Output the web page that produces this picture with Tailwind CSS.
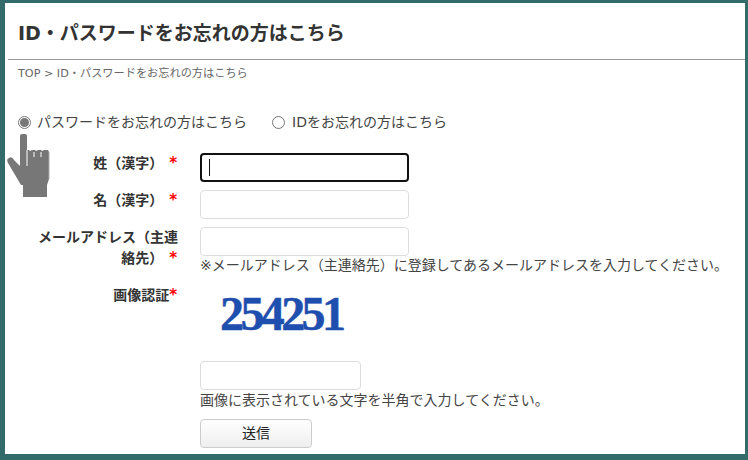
<!DOCTYPE html>
<html lang="ja">
<head>
  <meta charset="UTF-8">
  <title>ID・パスワードをお忘れの方はこちら</title>
  <script src="https://cdn.jsdelivr.net/npm/@tailwindcss/browser@4"></script>
</head>
<body class="w-[748px] h-[460px] overflow-hidden bg-[#336b6b] pt-[3px] pl-[5px] pr-[3px] pb-[6px] font-['DejaVu_Sans','Noto_Sans_CJK_JP',sans-serif] text-[#333]">
  <main class="relative h-[451px] bg-white overflow-hidden">

    <!-- Title -->
    <div class="ml-[3px] h-[57px] border-b border-[#999] pl-[10px] pt-[17px]">
      <h1 class="text-[19px] leading-[27px] font-bold whitespace-nowrap">ID・パスワードをお忘れの方はこちら</h1>
    </div>

    <!-- Breadcrumb -->
    <p class="pl-[13px] pt-[6px] h-[14px] text-[11.2px] leading-[16px] text-[#666] whitespace-nowrap">TOP &gt; ID・パスワードをお忘れの方はこちら</p>

    <!-- Radios -->
    <div class="flex items-center pl-[13px] mt-[36px] h-[24px] text-[14px] text-[#444] whitespace-nowrap">
      <span class="w-[13px] h-[13px] rounded-full border border-[#767676] flex items-center justify-center">
        <span class="w-[9px] h-[9px] rounded-full bg-[#777]"></span>
      </span>
      <span class="ml-[6px]">パスワードをお忘れの方はこちら</span>
      <span class="ml-[25px] w-[13px] h-[13px] rounded-full border border-[#767676]"></span>
      <span class="ml-[7px]">IDをお忘れの方はこちら</span>
    </div>

    <!-- Form -->
    <div class="grid grid-cols-[173px_1fr] gap-x-[22px] mt-[19px] text-[14px]">
      <div class="h-[37px] pt-[1px] text-right font-bold leading-[18px] whitespace-nowrap">姓（漢字）<span class="ml-[6px] mr-[1px] text-[15px] text-[#f00]">*</span></div>
      <div class="h-[37px]">
        <div class="w-[209px] h-[29px] rounded-[4px] border-2 border-[#111] bg-white pl-[7px] pt-[4px]">
          <div class="w-px h-[17px] bg-[#111]"></div>
        </div>
      </div>

      <div class="h-[37px] pt-[1px] text-right font-bold leading-[18px] whitespace-nowrap">名（漢字）<span class="ml-[6px] mr-[1px] text-[15px] text-[#f00]">*</span></div>
      <div class="h-[37px]">
        <div class="w-[209px] h-[29px] rounded-[4px] border border-[#ddd] bg-white"></div>
      </div>

      <div class="h-[57px] text-right font-bold leading-[21px] pl-[28px]">メールアドレス（主連絡先）<span class="ml-[6px] mr-[1px] text-[15px] text-[#f00]">*</span></div>
      <div class="h-[57px]">
        <div class="w-[209px] h-[29px] rounded-[4px] border border-[#ddd] bg-white"></div>
        <p class="text-[14px] leading-[18px] text-[#444] whitespace-nowrap">※メールアドレス（主連絡先）に登録してあるメールアドレスを入力してください。</p>
      </div>

      <div class="pt-[1px] text-right font-bold leading-[21px]">画像認証<span class="mr-[1px] text-[15px] text-[#f00]">*</span></div>
      <div>
        <div class="h-[77px] pl-[20px] pt-[1px] font-['Liberation_Serif',serif] font-bold text-[48px] leading-[58px] tracking-[-3.6px] [-webkit-text-stroke:0.5px_#1f4fae] text-[#1f4fae]">254251</div>
        <div class="w-[161px] h-[29px] rounded-[4px] border border-[#ddd] bg-white"></div>
        <p class="mt-[1px] text-[14px] leading-[18px] text-[#444] whitespace-nowrap">画像に表示されている文字を半角で入力してください。</p>
        <button class="mt-[10px] block w-[112px] h-[29px] rounded-[4px] border border-[#ccc] bg-gradient-to-b from-white to-[#eee] text-[14px] text-[#222]">送信</button>
      </div>
    </div>

    <!-- Hand cursor over the form -->
    <svg class="absolute left-[2px] top-[130px]" width="46" height="66" viewBox="0 0 46 66">
      <path d="M13 3 Q13 1 15 1 L18 1 Q20 1 20 3 L20 17 L22 17 L23 18 L25 17 L28 17 L29 18 L31 17 L34 17 L35 18 L37 17 L41 17 L42 19 L42 46 L40 52 L40 64 L16 64 L16 52 L14 52 L1 30 Q-1 26 2 25 Q5 23 7 27 L13 33 Z" fill="#777"/>
      <path d="M20 17 L20 33 M27 19 L27 24 M34 19 L34 24" stroke="#fff" stroke-width="1" fill="none"/>
      <path d="M42 19 L42 46" stroke="#aaa" stroke-width="1" fill="none"/>
    </svg>
  </main>
</body>
</html>
